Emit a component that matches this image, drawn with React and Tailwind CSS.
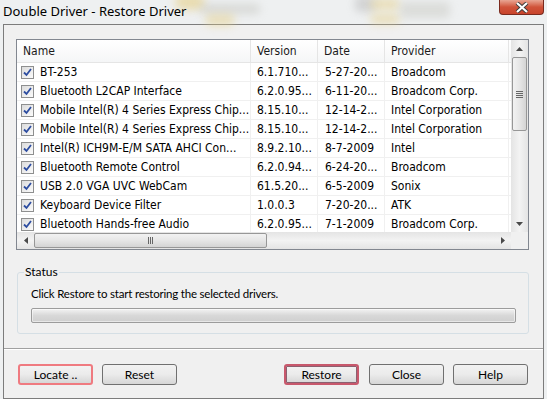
import React from 'react';

const ROWS = [
  ['BT-253', '6.1.710...', '5-27-20...', 'Broadcom'],
  ['Bluetooth L2CAP Interface', '6.2.0.95...', '6-11-20...', 'Broadcom Corp.'],
  ['Mobile Intel(R) 4 Series Express Chip...', '8.15.10...', '12-14-2...', 'Intel Corporation'],
  ['Mobile Intel(R) 4 Series Express Chip...', '8.15.10...', '12-14-2...', 'Intel Corporation'],
  ['Intel(R) ICH9M-E/M SATA AHCI Con...', '8.9.2.10...', '8-7-2009', 'Intel'],
  ['Bluetooth Remote Control', '6.2.0.94...', '6-24-20...', 'Broadcom'],
  ['USB 2.0 VGA UVC WebCam', '61.5.20...', '6-5-2009', 'Sonix'],
  ['Keyboard Device Filter', '1.0.0.3', '7-20-20...', 'ATK'],
  ['Bluetooth Hands-free Audio', '6.2.0.95...', '7-1-2009', 'Broadcom Corp.'],
];

const COLS = 'grid grid-cols-[234px_67px_67px_124px]';
const LIST_FONT = { fontFamily: '"DejaVu Sans Condensed", "DejaVu Sans", sans-serif' };
const UI_FONT = { fontFamily: 'Lato, "Noto Sans", sans-serif' };
const TITLE_FONT = { fontFamily: '"Noto Sans", "Liberation Sans", sans-serif' };

function Checkbox() {
  return (
    <span className="w-[13px] h-[13px] shrink-0 border border-[#8e8f8f] bg-gradient-to-br from-[#dcdcdc] to-[#fbfbfb] flex items-center justify-center">
      <svg width="9" height="9" viewBox="0 0 9 9">
        <path d="M1 4.5 L3.5 7 L8 1" fill="none" stroke="#2d4da0" strokeWidth="1.8" />
      </svg>
    </span>
  );
}

function Button({ label, ring }) {
  const ringCls =
    ring === 'light'
      ? 'border-2 border-[#ef7a80]'
      : ring === 'dark'
      ? 'border-2 border-[#c8586c] shadow-[inset_0_0_0_1px_#8c6070]'
      : 'border border-[#707070]';
  return (
    <button
      className={`w-[75px] h-[21px] rounded-[3px] bg-gradient-to-b from-[#f2f2f2] via-[#ebebeb] to-[#d6d6d6] text-[12px] text-black flex items-center justify-center ${ringCls}`}
      style={UI_FONT}
    >
      {label}
    </button>
  );
}

function ArrowUp() {
  return (
    <svg width="7" height="4" viewBox="0 0 7 4"><path d="M0 4 L3.5 0 L7 4 Z" fill="#4a4a4a" /></svg>
  );
}
function ArrowDown() {
  return (
    <svg width="7" height="4" viewBox="0 0 7 4"><path d="M0 0 L3.5 4 L7 0 Z" fill="#4a4a4a" /></svg>
  );
}
function ArrowLeft() {
  return (
    <svg width="4" height="7" viewBox="0 0 4 7"><path d="M4 0 L0 3.5 L4 7 Z" fill="#4a4a4a" /></svg>
  );
}
function ArrowRight() {
  return (
    <svg width="4" height="7" viewBox="0 0 4 7"><path d="M0 0 L4 3.5 L0 7 Z" fill="#4a4a4a" /></svg>
  );
}

export default function App() {
  return (
    <div className="relative w-[547px] h-[399px] overflow-hidden bg-[#eef0f1]">
      {/* blurred desktop behind the glass title bar */}
      <div className="absolute left-[175px] top-[-6px] w-[30px] h-[16px] rounded-full bg-[#e6cf86] opacity-60 blur-[4px]" />
      <div className="absolute left-[200px] top-[4px] w-[60px] h-[10px] rounded bg-[#b8b8b0] opacity-40 blur-[4px]" />
      <div className="absolute left-[205px] top-[14px] w-[30px] h-[12px] rounded-full bg-[#e6cf86] opacity-50 blur-[4px]" />
      <div className="absolute left-[355px] top-[-4px] w-[20px] h-[16px] rounded bg-[#a9a9a9] opacity-40 blur-[4px]" />
      <div className="absolute left-[370px] top-[-2px] w-[30px] h-[12px] rounded-full bg-[#e6cf86] opacity-50 blur-[4px]" />
      <div className="absolute left-[370px] top-[14px] w-[30px] h-[10px] rounded-full bg-[#e6cf86] opacity-50 blur-[4px]" />
      <div className="absolute left-[400px] top-[2px] w-[50px] h-[16px] rounded bg-[#c0c0b8] opacity-40 blur-[4px]" />

      {/* title bar */}
      <div className="relative h-[24px] flex items-center pl-[3px]">
        <span className="text-[13px] text-black" style={TITLE_FONT}>
          Double Driver - Restore Driver
        </span>
      </div>
      <div className="absolute top-0 left-[499px] w-[45px] h-[15px] rounded-b-[4px] border border-t-0 border-[#7a2a1e] bg-gradient-to-b from-[#e8a593] via-[#d0533a] to-[#c8442c] flex items-center justify-center">
        <svg width="14" height="11" viewBox="0 0 14 11">
          <path d="M2 1 L12 10 M12 1 L2 10" stroke="#3b3b3b" strokeWidth="4" />
          <path d="M2 1 L12 10 M12 1 L2 10" stroke="#ffffff" strokeWidth="2.2" />
        </svg>
      </div>

      {/* client area */}
      <div className="ml-[3px] w-[541px] h-[375px] border border-[#7c7c7c] bg-[#f0f0f0] flex flex-col">
        {/* list view */}
        <div className="ml-[12px] mt-[14px] w-[513px] h-[211px] shrink-0 border border-[#828790] bg-white flex flex-col" style={LIST_FONT}>
          <div className="flex h-[192px] shrink-0">
            <div className="w-[494px] flex flex-col overflow-hidden">
              <div className={`${COLS} h-[23px] shrink-0 bg-gradient-to-b from-white to-[#f5f6f7] border-b border-[#e5e5e5] text-[12px] text-[#1a1a1a]`}>
                {['Name', 'Version', 'Date', 'Provider'].map((h) => (
                  <div key={h} className="flex items-center px-[6px] border-r border-[#e5e5e5]">
                    {h}
                  </div>
                ))}
              </div>
              {ROWS.map((r, i) => (
                <div key={i} className={`${COLS} h-[19px] shrink-0 border-b border-[#f0f0f0] text-[12px] text-black`}>
                  <div className="flex items-center gap-[6px] pl-[4px] border-r border-[#f0f0f0] whitespace-nowrap overflow-hidden">
                    <Checkbox />
                    <span>{r[0]}</span>
                  </div>
                  <div className="flex items-center pl-[6px] border-r border-[#f0f0f0] whitespace-nowrap overflow-hidden">{r[1]}</div>
                  <div className="flex items-center pl-[7px] border-r border-[#f0f0f0] whitespace-nowrap overflow-hidden">{r[2]}</div>
                  <div className="flex items-center pl-[6px] border-r border-[#f0f0f0] whitespace-nowrap overflow-hidden">{r[3]}</div>
                </div>
              ))}
            </div>
            {/* vertical scrollbar */}
            <div className="w-[17px] flex flex-col bg-gradient-to-r from-[#e4e4e4] via-[#f3f3f3] to-[#e4e4e4]">
              <div className="h-[17px] flex items-center justify-center">
                <ArrowUp />
              </div>
              <div className="mx-[1px] h-[74px] rounded-[2px] border border-[#979797] bg-gradient-to-r from-[#f2f2f2] via-[#e6e6e6] to-[#d4d4d4] flex flex-col items-center justify-center gap-[1px]">
                <span className="w-[7px] h-[1px] bg-[#666]" />
                <span className="w-[7px] h-[1px] bg-[#666]" />
                <span className="w-[7px] h-[1px] bg-[#666]" />
                <span className="w-[7px] h-[1px] bg-[#666]" />
              </div>
              <div className="flex-1" />
              <div className="h-[17px] flex items-center justify-center">
                <ArrowDown />
              </div>
            </div>
          </div>
          {/* horizontal scrollbar */}
          <div className="flex h-[17px] shrink-0">
            <div className="w-[494px] flex items-center bg-gradient-to-b from-[#e4e4e4] via-[#f3f3f3] to-[#e4e4e4]">
              <div className="w-[17px] flex items-center justify-center">
                <ArrowLeft />
              </div>
              <div className="w-[233px] h-[15px] rounded-[2px] border border-[#979797] bg-gradient-to-b from-[#f2f2f2] via-[#e6e6e6] to-[#d4d4d4] flex items-center justify-center gap-[1px]">
                <span className="w-[1px] h-[7px] bg-[#666]" />
                <span className="w-[1px] h-[7px] bg-[#666]" />
                <span className="w-[1px] h-[7px] bg-[#666]" />
              </div>
              <div className="flex-1" />
              <div className="w-[17px] flex items-center justify-center">
                <ArrowRight />
              </div>
            </div>
            <div className="w-[17px] bg-[#f0f0f0]" />
          </div>
        </div>

        {/* status group */}
        <div className="relative ml-[13px] mt-[22px] w-[512px] h-[62px] shrink-0 rounded-[3px] border border-[#d5dfe5] flex flex-col" style={UI_FONT}>
          <span className="absolute left-[6px] top-[-9px] px-[1px] bg-[#f0f0f0] text-[12px] leading-[16px] text-black">
            Status
          </span>
          <div className="mt-[13px] ml-[13px] text-[11.5px] tracking-[-0.2px] leading-[16px] text-black">
            Click Restore to start restoring the selected drivers.
          </div>
          <div className="mt-[6px] ml-[13px] w-[485px] h-[15px] border border-[#9c9c9c] rounded-[2px] bg-gradient-to-b from-[#f3f3f3] via-[#d8d8d8] to-[#cfcfcf] shadow-[inset_0_0_0_1px_#ffffff80]" />
        </div>

        {/* separator */}
        <div className="mt-[14px] h-[2px] shrink-0 border-t border-[#a0a0a0] border-b border-b-white" />

        {/* buttons */}
        <div className="mt-[14px] ml-[14px] flex">
          <Button label="Locate .." ring="light" />
          <div className="ml-[9px]">
            <Button label="Reset" />
          </div>
          <div className="ml-[107px]">
            <Button label="Restore" ring="dark" />
          </div>
          <div className="ml-[10px]">
            <Button label="Close" />
          </div>
          <div className="ml-[9px]">
            <Button label="Help" />
          </div>
        </div>
      </div>
    </div>
  );
}
